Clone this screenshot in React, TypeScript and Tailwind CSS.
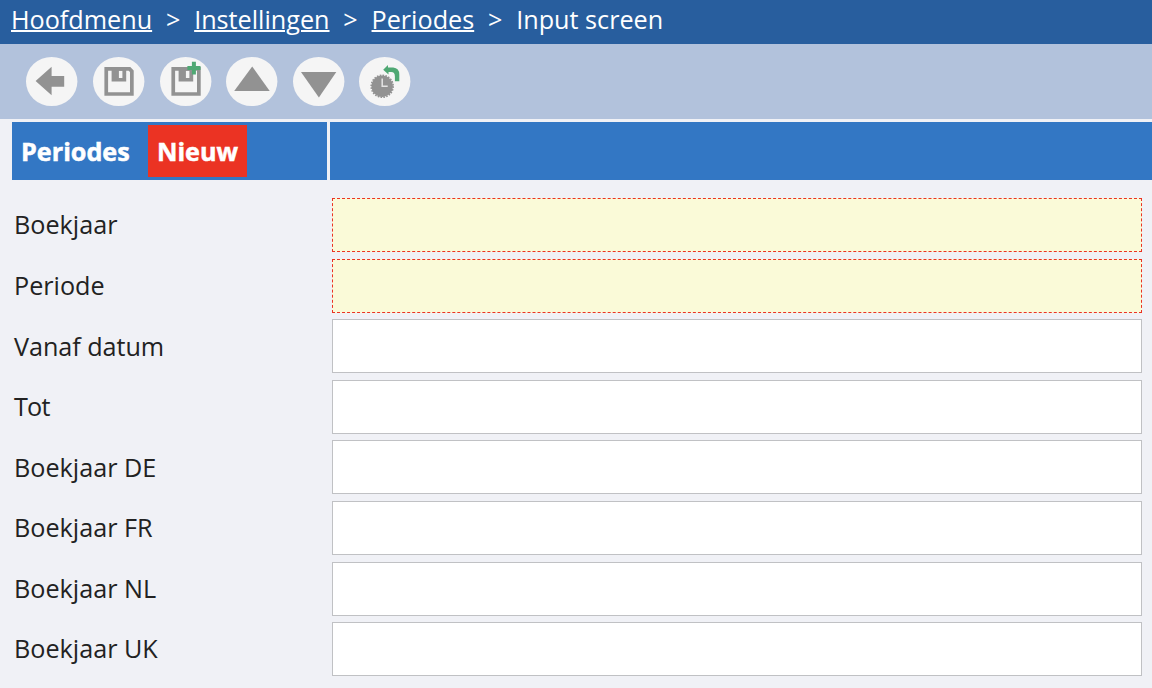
import React from "react";

const crumbs = ["Hoofdmenu", "Instellingen", "Periodes"];

const fields = [
  { label: "Boekjaar", required: true, row: "h-[61px]", offset: "pt-[8px]" },
  { label: "Periode", required: true, row: "h-[60px]", offset: "pt-[8px]" },
  { label: "Vanaf datum", required: false, row: "h-[61px]", offset: "pt-[9px] tracking-[-0.05px]" },
  { label: "Tot", required: false, row: "h-[60px]", offset: "pt-[8px] tracking-[-0.8px]" },
  { label: "Boekjaar DE", required: false, row: "h-[61px]", offset: "pt-[9px]" },
  { label: "Boekjaar FR", required: false, row: "h-[61px]", offset: "pt-[8px]" },
  { label: "Boekjaar NL", required: false, row: "h-[60px]", offset: "pt-[8px]" },
  { label: "Boekjaar UK", required: false, row: "h-[61px]", offset: "pt-[8px]" },
];

function ToolButton({ label, gap, children }: { label: string; gap: string; children: React.ReactNode }) {
  return (
    <button aria-label={label} className={`block h-[52px] w-[52px] shrink-0 ${gap}`}>
      <svg viewBox="0 0 52 52" className="block h-[52px] w-[52px]" fill="#929292">
        <g transform="translate(-0.3 0.5)">
          <ellipse cx="26" cy="25" rx="25.7" ry="24.6" fill="#f5f5f5" />
          {children}
        </g>
      </svg>
    </button>
  );
}

function Floppy({ corner = false }: { corner?: boolean }) {
  return (
    <>
      <path
        fillRule="evenodd"
        d={
          corner
            ? "M11.7 10.6H37.6L41 14V39.2H11.7ZM15.4 14.2V35.7H37.3V15.6L36 14.2Z"
            : "M11.7 10.6H41V39.2H11.7ZM15.4 14.2V35.7H37.3V14.2Z"
        }
      />
      <path fillRule="evenodd" d="M18.9 12H33.5V25H18.9ZM26.2 14.2V21.4H29.7V14.2Z" />
    </>
  );
}

export default function App() {
  return (
    <div className="flex h-[688px] w-[1152px] flex-col overflow-hidden bg-[#f0f1f6] font-['Open_Sans',sans-serif] text-[25.2px] leading-[36px] text-[#222222]">
      <nav className="flex h-[44px] shrink-0 items-start bg-[#285e9e] pl-[11px] pt-[1px] text-white">
        {crumbs.map((c) => (
          <React.Fragment key={c}>
            <a className="underline decoration-2 underline-offset-[1px]">{c}</a>
            <span className="px-[13.8px]">&gt;</span>
          </React.Fragment>
        ))}
        <span>Input screen</span>
      </nav>
      <div className="flex h-[75px] shrink-0 items-start bg-[#b2c2dc] pl-[26px] pt-[12px]">
        <ToolButton label="Terug" gap="mr-[15px]">
          <path d="M9.9 24.5 25.9 10.2V19.5H38.5V30.2H25.9V38.8Z" />
        </ToolButton>
        <ToolButton label="Opslaan" gap="mr-[15px]">
          <Floppy corner />
        </ToolButton>
        <ToolButton label="Opslaan en nieuw" gap="mr-[14px]">
          <Floppy />
          <path fill="#4fa873" d="M32.2 5.2H36.2V9.5H40.8V13.6H36.2V17.9H32.2V13.6H27.7V9.5H32.2Z" />
        </ToolButton>
        <ToolButton label="Vorige" gap="mr-[15px]">
          <path d="M26.5 10 44 34.5H8.5Z" />
        </ToolButton>
        <ToolButton label="Volgende" gap="mr-[14px]">
          <path d="M8.3 15.5H43.6L26.2 41Z" />
        </ToolButton>
        <ToolButton label="Historie" gap="mr-0">
          <circle cx="23.5" cy="29.8" r="10.7" />
          <circle cx="23.5" cy="29.8" r="11" fill="none" stroke="#929292" strokeWidth="1.6" strokeDasharray="1.6 1.28" />
          <path d="M23.5 22V29.8H29" fill="none" stroke="#e4e4e4" strokeWidth="1.5" />
          <path
            fill="#4fa873"
            d="M24.5 13.3 29.3 8.6V11H34.5Q40.6 11.5 40.6 18V24.8H36.2V20Q36.2 15.6 32.5 15.6H29.8V18Z"
          />
        </ToolButton>
      </div>
      <div className="mt-[3px] flex h-[58px] shrink-0 gap-[3px] pl-[12px] font-bold text-white [-webkit-text-stroke:0.5px_white]">
        <div className="flex w-[315px] items-center bg-[#3377c4] pl-[9px]">
          <span className="w-[127px]">Periodes</span>
          <span className="flex h-[52px] w-[99px] items-center justify-center bg-[#eb3323]">Nieuw</span>
        </div>
        <div className="flex-1 bg-[#3377c4]" />
      </div>
      <form className="flex flex-col pt-[18px]">
        {fields.map((f) => (
          <label key={f.label} className={`flex shrink-0 items-start pl-[14px] pr-[10px] ${f.row}`}>
            <span className={`w-[318px] ${f.offset}`}>{f.label}</span>
            <input
              className={`h-[54px] flex-1 border px-2 outline-none ${
                f.required ? "border-dashed border-[#eb3323] bg-[#fafad8]" : "border-[#c0c1c4] bg-white"
              }`}
            />
          </label>
        ))}
      </form>
    </div>
  );
}
